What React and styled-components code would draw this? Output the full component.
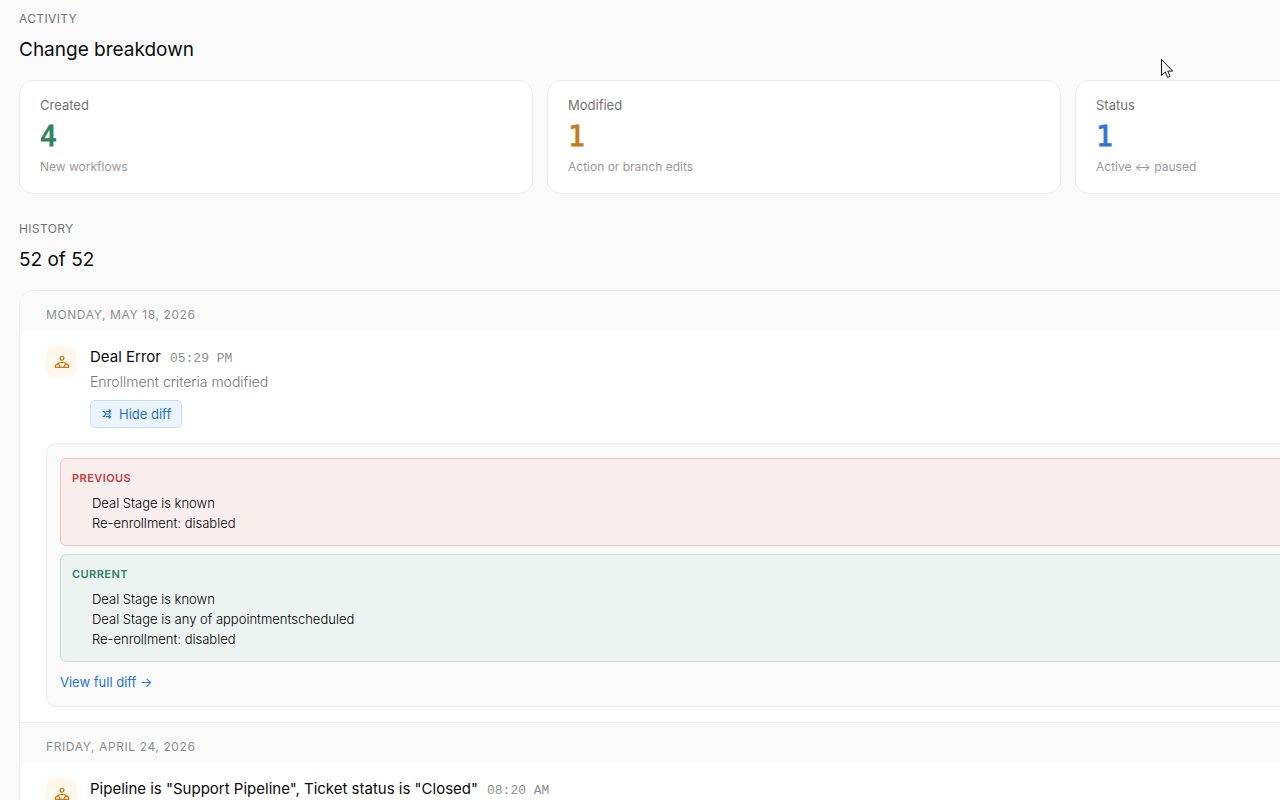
import React from 'react';
import styled, { createGlobalStyle } from 'styled-components';

const GlobalStyle = createGlobalStyle`
	*, *::before, *::after {
		box-sizing: border-box;
	}
	body {
		margin: 0;
		background-color: #fafafa;
		color: #0a0a0a;
		font-family: Inter, "Liberation Sans", sans-serif;
		overflow: hidden;
	}
	h2, h3, p, ul {
		margin: 0;
		padding: 0;
		font-weight: 400;
	}
`

const Page = styled.main`
	width: calc(125% + 8px);
	padding: 11px 19px 0;
`
const Section = styled.section`
	margin-bottom: 27px;
`
const Eyebrow = styled.p`
	font-size: 12px;
	line-height: 16px;
	letter-spacing: 0.03em;
	text-transform: uppercase;
	color: #737373;
`
const SectionTitle = styled.h2`
	margin: 9px 0 16px;
	font-size: 19px;
	line-height: 28px;
`

const StatGrid = styled.div`
	display: grid;
	grid-template-columns: repeat(3, 1fr);
	gap: 14px;
`
const StatCard = styled.div`
	padding: 14px 20px 16px;
	background-color: #fff;
	border: 1px solid #ebebeb;
	border-radius: 14px;
`
const StatLabel = styled.p`
	font-size: 13px;
	line-height: 20px;
	color: #737373;
`
const StatValue = styled.p`
	margin-top: 2px;
	font-family: "DejaVu Sans Mono", monospace;
	font-size: 28px;
	line-height: 40px;
	-webkit-text-stroke: 1px;
	color: ${props => props.$color};
`
const StatHint = styled.p`
	font-size: 12px;
	line-height: 20px;
	color: #999;
`

const Timeline = styled.div`
	background-color: #fff;
	border: 1px solid #ebebeb;
	border-radius: 14px;
	overflow: hidden;
`
const Day = styled.div`
	& + & {
		border-top: 1px solid #ebebeb;
	}
`
const DayHeading = styled.h3`
	padding: 16px 26px 8px;
	background-color: #fafafa;
	font-size: 12px;
	line-height: 16px;
	letter-spacing: 0.05em;
	text-transform: uppercase;
	color: #8f8f8f;
`
const Entry = styled.article`
	padding: 15px 26px;
`
const EntryHead = styled.div`
	display: flex;
	align-items: flex-start;
	gap: 13px;
`
const EntryIcon = styled.span`
	display: flex;
	align-items: center;
	justify-content: center;
	flex-shrink: 0;
	width: 31px;
	height: 31px;
	border-radius: 8px;
	background-color: #fff7eb;
	color: #c97a1a;
`
const EntryTitle = styled.div`
	display: flex;
	align-items: baseline;
	gap: 9px;
	font-size: 15px;
	line-height: 22px;
`
const EntryTime = styled.time`
	font-family: "Liberation Mono", monospace;
	font-size: 13px;
	color: #8f8f8f;
`
const EntryText = styled.p`
	margin-top: 2px;
	font-size: 14px;
	line-height: 20px;
	font-weight: 300;
	color: #737373;
`
const DiffToggle = styled.button`
	display: inline-flex;
	align-items: center;
	gap: 6px;
	height: 28px;
	margin-top: 8px;
	padding: 0 10px;
	border: 1px solid #c3dcf5;
	border-radius: 5px;
	background-color: #ebf4fd;
	color: #2473d8;
	font-family: inherit;
	font-size: 13px;
	cursor: pointer;
`

const DiffPanel = styled.div`
	display: flex;
	flex-direction: column;
	gap: 8px;
	margin-top: 15px;
	padding: 14px 13px;
	border: 1px solid #ebebeb;
	border-radius: 10px;
	background-color: #fafafa;
`
const tones = {
	previous: { text: '#c43c3c', border: '#efc4c4', background: '#f8eeed' },
	current: { text: '#2f8262', border: '#bfdfd3', background: '#ecf3f1' },
}
const DiffBox = styled.div`
	padding: 11px 11px 12px;
	border: 1px solid ${props => tones[props.$tone].border};
	border-radius: 6px;
	background-color: ${props => tones[props.$tone].background};
`
const DiffLabel = styled.p`
	margin-bottom: 7px;
	font-size: 11px;
	line-height: 16px;
	font-weight: 600;
	letter-spacing: 0.04em;
	text-transform: uppercase;
	color: ${props => tones[props.$tone].text};
`
const DiffList = styled.ul`
	padding-left: 20px;
	list-style: none;
	font-size: 13px;
	font-weight: 300;
	line-height: 20px;
	color: #000;
`
const DiffLink = styled.a`
	align-self: flex-start;
	padding-top: 2px;
	font-size: 13px;
	line-height: 20px;
	color: #2473d8;
	text-decoration: none;
`
const Pointer = styled.svg`
	position: absolute;
	top: 58px;
	left: 1160px;
	pointer-events: none;
`

const EnrollmentIcon = () => (
	<svg width="16" height="16" viewBox="0 0 16 16" fill="none" stroke="currentColor" strokeWidth="1.3" strokeLinejoin="round" aria-hidden="true">
		<circle cx="8" cy="4.3" r="1.9" />
		<path d="M3.400 10.100C4.200 9 5.800 8.400 8 8.400s3.800.6 4.600 1.700" />
		<path d="M1.200 13.300c0-2 .8-3.200 2.300-3.200s2.300 1.200 2.500 3.200M10 13.300c.2-2 1-3.200 2.500-3.200s2.300 1.200 2.300 3.200M.9 13.300h14.200" />
	</svg>
)

const DiffIcon = () => (
	<svg width="12" height="12" viewBox="0 0 12 12" fill="none" stroke="currentColor" strokeWidth="1.2" aria-hidden="true">
		<path d="M1.500 3.700h1.800l1.500 2.300h5.500M1.500 8.300h1.800l1.500-2.300M4.800 3.300h4.500M4.800 8.700h4.500" />
		<path d="M7.600 1.300l2 2-1.500 1.500M7.600 10.700l2-2-1.500-1.500" />
	</svg>
)

const stats = [
	{ label: 'Created', value: 4, hint: 'New workflows', color: '#2f8262' },
	{ label: 'Modified', value: 1, hint: 'Action or branch edits', color: '#c97a1a' },
	{ label: 'Status', value: 1, hint: 'Active ↔ paused', color: '#2f74dc' },
]

const days = [
	{
		date: 'Monday, May 18, 2026',
		title: 'Deal Error',
		time: '05:29 PM',
		previous: ['Deal Stage is known', 'Re-enrollment: disabled'],
		current: ['Deal Stage is known', 'Deal Stage is any of appointmentscheduled', 'Re-enrollment: disabled'],
	},
	{
		date: 'Friday, April 24, 2026',
		title: 'Pipeline is "Support Pipeline", Ticket status is "Closed"',
		time: '08:20 AM',
	},
]

const DiffSide = ({ tone, items }) => (
	<DiffBox $tone={tone}>
		<DiffLabel $tone={tone}>{tone}</DiffLabel>
		<DiffList>
			{items.map(item => <li key={item}>{item}</li>)}
		</DiffList>
	</DiffBox>
)

const HistoryEntry = ({ entry }) => (
	<Entry>
		<EntryHead>
			<EntryIcon><EnrollmentIcon /></EntryIcon>
			<div>
				<EntryTitle>
					<span>{entry.title}</span>
					<EntryTime>{entry.time}</EntryTime>
				</EntryTitle>
				{entry.current && (
					<>
						<EntryText>Enrollment criteria modified</EntryText>
						<DiffToggle type="button" aria-expanded="true">
							<DiffIcon />
							Hide diff
						</DiffToggle>
					</>
				)}
			</div>
		</EntryHead>
		{entry.current && (
			<DiffPanel>
				<DiffSide tone="previous" items={entry.previous} />
				<DiffSide tone="current" items={entry.current} />
				<DiffLink href="#diff">View full diff →</DiffLink>
			</DiffPanel>
		)}
	</Entry>
)

const App = () => {
	return (
		<>
			<GlobalStyle />
			<Page>
				<Section>
					<Eyebrow>Activity</Eyebrow>
					<SectionTitle>Change breakdown</SectionTitle>
					<StatGrid>
						{stats.map(stat => (
							<StatCard key={stat.label}>
								<StatLabel>{stat.label}</StatLabel>
								<StatValue $color={stat.color}>{stat.value}</StatValue>
								<StatHint>{stat.hint}</StatHint>
							</StatCard>
						))}
					</StatGrid>
				</Section>
				<Section>
					<Eyebrow>History</Eyebrow>
					<SectionTitle>52 of 52</SectionTitle>
					<Timeline>
						{days.map(day => (
							<Day key={day.date}>
								<DayHeading>{day.date}</DayHeading>
								<HistoryEntry entry={day} />
							</Day>
						))}
					</Timeline>
				</Section>
			</Page>
			<Pointer width="14" height="21" viewBox="0 0 14 21" aria-hidden="true">
				<path d="M1.500 1.500v16l3.700-3.500 2.500 5.400 2.400-1.100-2.400-5.200h5z" fill="#fff" stroke="#111" strokeWidth="1" />
			</Pointer>
		</>
	)
}
export default App;
